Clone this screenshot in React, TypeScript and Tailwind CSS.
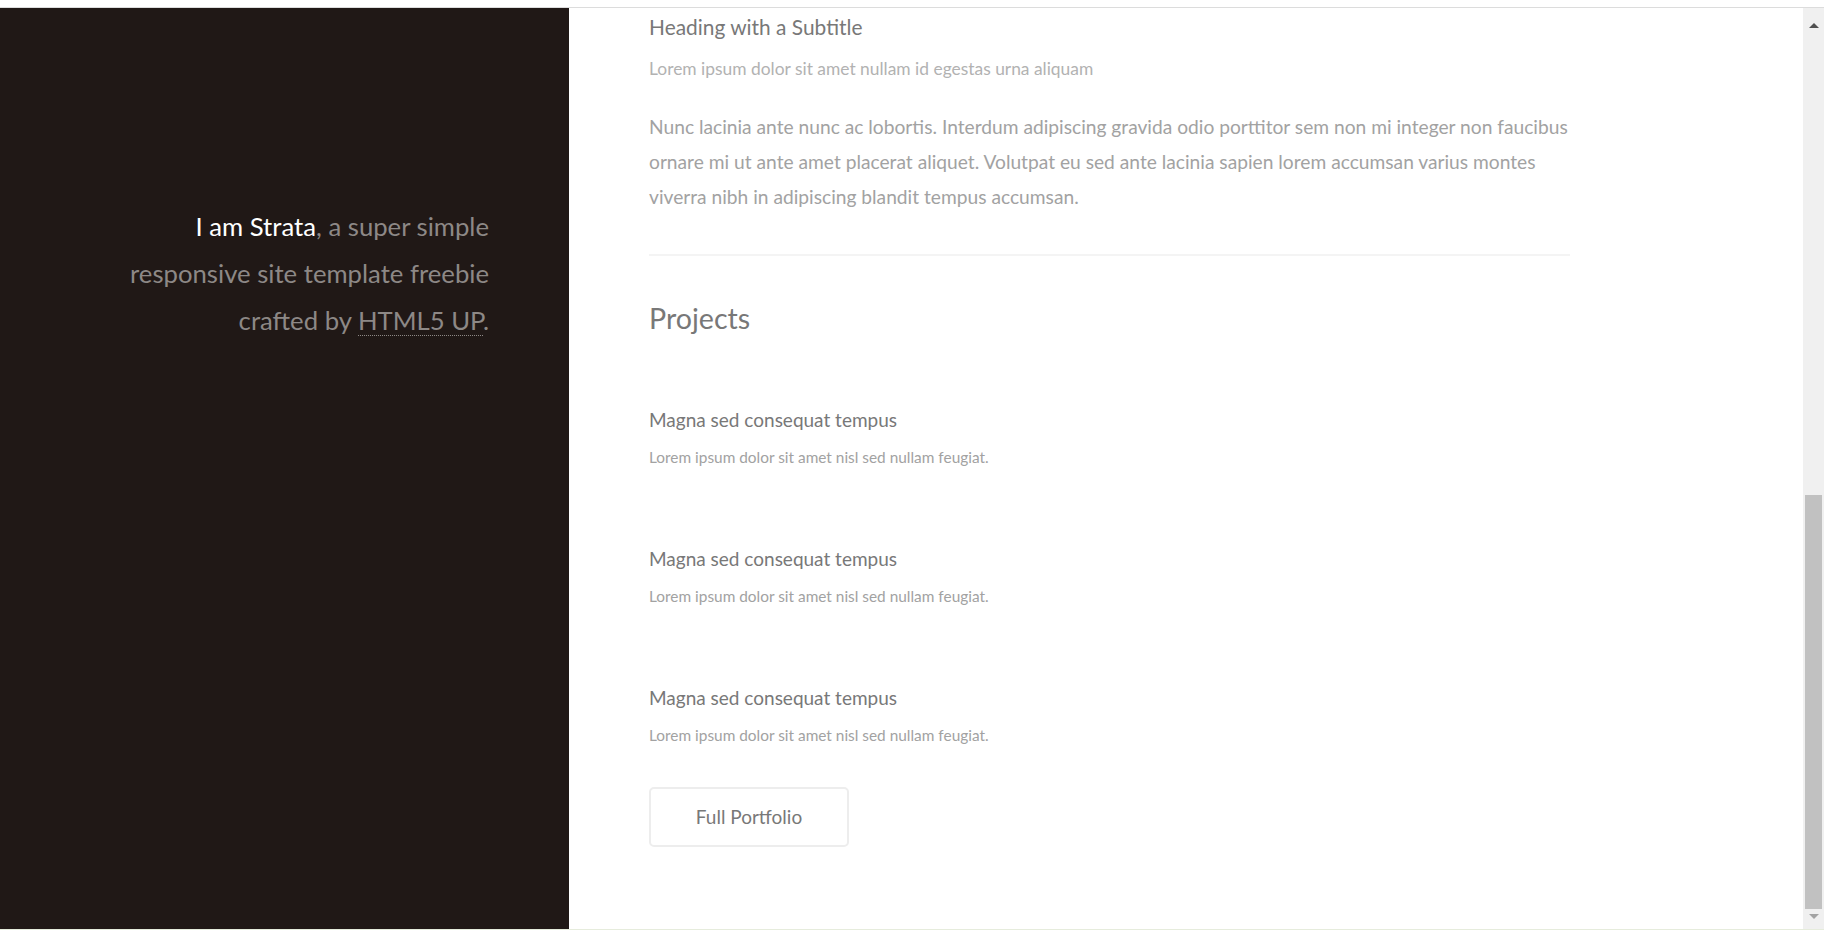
const projects = [
  {
    title: "Magna sed consequat tempus",
    text: "Lorem ipsum dolor sit amet nisl sed nullam feugiat.",
  },
  {
    title: "Magna sed consequat tempus",
    text: "Lorem ipsum dolor sit amet nisl sed nullam feugiat.",
  },
  {
    title: "Magna sed consequat tempus",
    text: "Lorem ipsum dolor sit amet nisl sed nullam feugiat.",
  },
];

const font = { fontFamily: "Lato, 'Noto Sans', sans-serif" };

const Header = () => (
  <header className="w-[569px] shrink-0 bg-[#201816] pt-[195px] pr-[80px] text-right">
    <h1 className="text-[25.7px] leading-[47px] text-[#8d8886]">
      <strong className="font-normal text-white">I am Strata</strong>, a super
      simple
      <br />
      responsive site template freebie
      <br />
      crafted by{" "}
      <a className="border-b border-dotted border-[#8d8886]">HTML5 UP</a>.
    </h1>
  </header>
);

const Scrollbar = () => (
  <div className="w-[21px] shrink-0 bg-[#f0f0f0] flex flex-col items-center">
    <div className="h-[20px] flex items-end justify-center">
      <div className="w-0 h-0 border-l-[5px] border-r-[5px] border-b-[5px] border-l-transparent border-r-transparent border-b-[#505050]" />
    </div>
    <div className="mt-[467px] w-[17px] h-[414px] bg-[#c1c1c1]" />
    <div className="h-[10px] flex items-end justify-center">
      <div className="w-0 h-0 border-l-[5px] border-r-[5px] border-t-[5px] border-l-transparent border-r-transparent border-t-[#a3a3a3]" />
    </div>
  </div>
);

export default function App() {
  return (
    <div
      className="h-[930px] w-full overflow-hidden bg-white flex flex-col"
      style={font}
    >
      <div className="h-[7px] shrink-0 bg-white" />
      <div className="h-px shrink-0 bg-[#dcdcdc]" />
      <div className="flex h-[921px] shrink-0">
        <Header />
        <main className="flex-1 pl-[80px] pt-[4px]">
          <div className="w-[921px]">
            <h4 className="text-[20.9px] leading-[30px] text-[#787878]">
              Heading with a Subtitle
            </h4>
            <p className="mt-[15px] text-[17.4px] leading-[24px] text-[#b2b2b2]">
              Lorem ipsum dolor sit amet nullam id egestas urna aliquam
            </p>
            <p className="mt-[28px] w-[930px] text-[19.2px] leading-[35px] text-[#a2a2a2]">
              Nunc lacinia ante nunc ac lobortis. Interdum adipiscing gravida
              odio porttitor sem non mi integer non faucibus ornare mi ut ante
              amet placerat aliquet. Volutpat eu sed ante lacinia sapien lorem
              accumsan varius montes viverra nibh in adipiscing blandit tempus
              accumsan.
            </p>
            <hr className="mt-[40px] border-0 border-t-2 border-[#f4f4f4]" />
            <h2 className="mt-[42px] text-[28.6px] leading-[40px] text-[#787878]">
              Projects
            </h2>
            <div className="mt-[68px] flex flex-col gap-[77px]">
              {projects.map((p, i) => (
                <article key={i}>
                  <h3 className="text-[19px] leading-[28px] text-[#787878]">
                    {p.title}
                  </h3>
                  <p className="mt-[12px] text-[15.4px] leading-[22px] text-[#a2a2a2]">
                    {p.text}
                  </p>
                </article>
              ))}
            </div>
            <button className="mt-[41px] w-[200px] h-[60px] rounded-[5px] border-2 border-[#ededed] text-[19px] text-[#787878]">
              Full Portfolio
            </button>
          </div>
        </main>
        <Scrollbar />
      </div>
      <div className="h-px shrink-0 bg-[#e6ecdc]" />
    </div>
  );
}
